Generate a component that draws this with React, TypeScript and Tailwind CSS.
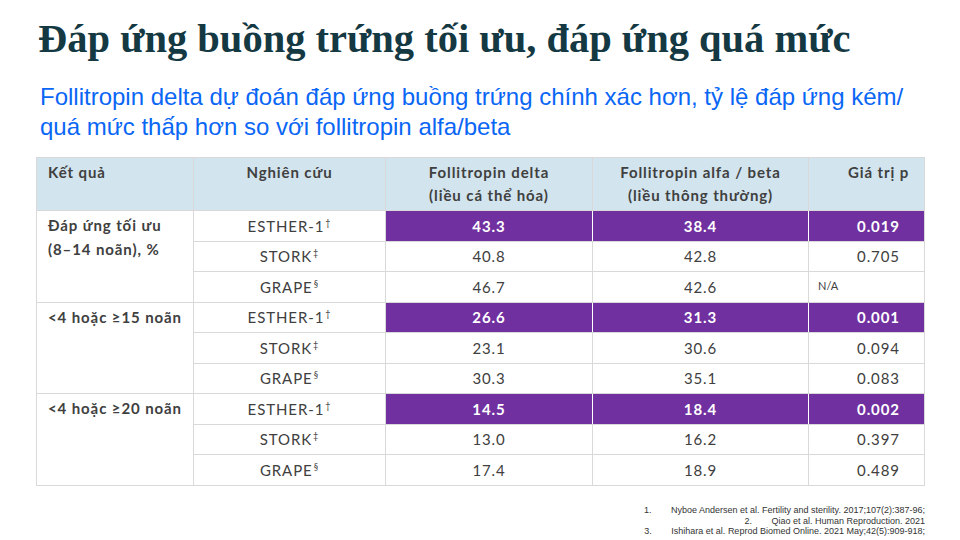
const rows = [
  {
    group: ['Đáp ứng tối ưu', '(8–14 noãn), %'],
    items: [
      { study: 'ESTHER-1', sup: '†', delta: '43.3', alfa: '38.4', p: '0.019', hi: true },
      { study: 'STORK', sup: '‡', delta: '40.8', alfa: '42.8', p: '0.705' },
      { study: 'GRAPE', sup: '§', delta: '46.7', alfa: '42.6', p: 'N/A' },
    ],
  },
  {
    group: ['<4 hoặc ≥15 noãn'],
    items: [
      { study: 'ESTHER-1', sup: '†', delta: '26.6', alfa: '31.3', p: '0.001', hi: true },
      { study: 'STORK', sup: '‡', delta: '23.1', alfa: '30.6', p: '0.094' },
      { study: 'GRAPE', sup: '§', delta: '30.3', alfa: '35.1', p: '0.083' },
    ],
  },
  {
    group: ['<4 hoặc ≥20 noãn'],
    items: [
      { study: 'ESTHER-1', sup: '†', delta: '14.5', alfa: '18.4', p: '0.002', hi: true },
      { study: 'STORK', sup: '‡', delta: '13.0', alfa: '16.2', p: '0.397' },
      { study: 'GRAPE', sup: '§', delta: '17.4', alfa: '18.9', p: '0.489' },
    ],
  },
]

const refs = [
  { n: '1.', text: 'Nyboe Andersen et al. Fertility and sterility. 2017;107(2):387-96;' },
  { n: '2.', text: 'Qiao et al. Human Reproduction. 2021' },
  { n: '3.', text: 'Ishihara et al. Reprod Biomed Online. 2021 May;42(5):909-918;' },
]

const cell = 'border border-[#d9d9d9] text-center'
const hiCell = 'border border-[#d9d9d9] border-r-white text-center bg-[#7030a0] text-white font-bold'

export default function App() {
  return (
    <div className="w-[960px] h-[540px] bg-white overflow-hidden relative">
      <h1
        className="pl-[38px] pt-[17px] text-[40.5px] leading-[44px] font-bold text-[#153943]"
        style={{ fontFamily: '"Liberation Serif", serif' }}
      >
        Đáp ứng buồng trứng tối ưu, đáp ứng quá mức
      </h1>
      <p
        className="pl-[40px] pt-[21px] text-[24px] leading-[30px] text-[#0a66f5] whitespace-nowrap"
        style={{ fontFamily: '"Liberation Sans", Arial, sans-serif' }}
      >
        Follitropin delta dự đoán đáp ứng buồng trứng chính xác hơn, tỷ lệ đáp ứng kém/
        <br />
        quá mức thấp hơn so với follitropin alfa/beta
      </p>

      <div className="pl-[36px] pt-[15px]" style={{ fontFamily: 'Lato, "Open Sans", sans-serif' }}>
        <table className="table-fixed border-collapse w-[888px] text-[15px] tracking-[0.9px] text-[#404040]">
          <colgroup>
            <col className="w-[157px]" />
            <col className="w-[192px]" />
            <col className="w-[207px]" />
            <col className="w-[216px]" />
            <col className="w-[116px]" />
          </colgroup>
          <thead>
            <tr className="h-[53px] bg-[#d2e4ee] align-top leading-[23px]">
              <th className="border border-[#d9d9d9] text-left pl-[11px] pt-[3px] font-bold">Kết quả</th>
              <th className="border border-[#d9d9d9] text-center pt-[3px] font-bold">Nghiên cứu</th>
              <th className="border border-[#d9d9d9] text-center pt-[3px] font-bold">
                Follitropin delta
                <br />
                (liều cá thể hóa)
              </th>
              <th className="border border-[#d9d9d9] text-center pt-[3px] font-bold">
                Follitropin alfa / beta
                <br />
                (liều thông thường)
              </th>
              <th className="border border-[#d9d9d9] text-center pl-[24px] pt-[3px] font-bold">Giá trị p</th>
            </tr>
          </thead>
          <tbody>
            {rows.map((g) =>
              g.items.map((r, i) => (
                <tr key={g.group[0] + r.study} className="h-[30.5px]">
                  {i === 0 && (
                    <td
                      rowSpan={3}
                      className="border border-[#d9d9d9] align-top pl-[11px] pt-[2px] font-bold leading-[24px]"
                    >
                      {g.group.map((l) => (
                        <div key={l}>{l}</div>
                      ))}
                    </td>
                  )}
                  <td className={cell}>
                    {r.study}
                    <sup className="text-[9px] ml-[1px] -top-[6px]">{r.sup}</sup>
                  </td>
                  <td className={r.hi ? hiCell : cell}>{r.delta}</td>
                  <td className={r.hi ? hiCell : cell}>{r.alfa}</td>
                  {r.p === 'N/A' ? (
                    <td className="border border-[#d9d9d9] pl-[9px] text-[11px] tracking-normal align-top pt-[6px]">
                      N/A
                    </td>
                  ) : (
                    <td
                      className={
                        r.hi
                          ? 'border border-[#d9d9d9] text-center pl-[24px] bg-[#7030a0] text-white font-bold'
                          : 'border border-[#d9d9d9] text-center pl-[24px]'
                      }
                    >
                      {r.p}
                    </td>
                  )}
                </tr>
              ))
            )}
          </tbody>
        </table>
      </div>

      <div
        className="absolute right-[35px] top-[505px] flex flex-col items-end text-[9px] leading-[10.5px] text-[#333]"
        style={{ fontFamily: '"Liberation Sans", Arial, sans-serif' }}
      >
        {refs.map((r) => (
          <div key={r.n} className="flex">
            <span className="w-[27px]">{r.n}</span>
            <span>{r.text}</span>
          </div>
        ))}
      </div>
    </div>
  )
}
